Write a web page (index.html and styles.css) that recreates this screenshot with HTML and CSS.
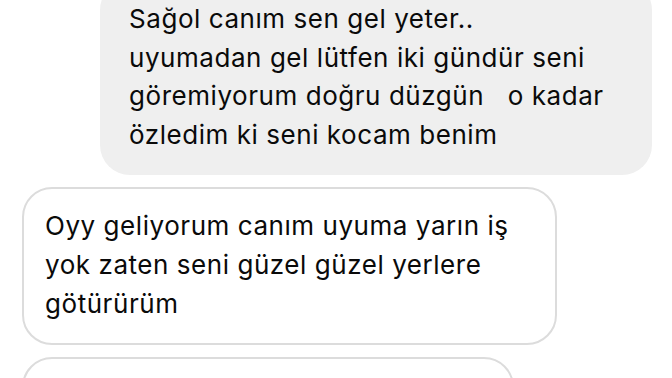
FILE: index.html
```html
<!DOCTYPE html>
<html lang="tr">
<head>
    <meta charset="UTF-8">
    <meta name="viewport" content="width=device-width, initial-scale=1.0">
    <title>Mesajlar</title>
    <link rel="stylesheet" href="styles.css">
</head>
<body>
    <div class="thread">
        <div class="msg sent">
            Sağol canım sen gel yeter..<br>
            uyumadan gel lütfen iki gündür seni<br>
            göremiyorum doğru düzgün&nbsp;&nbsp; o kadar<br>
            özledim ki seni kocam benim
        </div>
        <div class="msg received">
            Oyy geliyorum canım uyuma yarın iş<br>
            yok zaten seni güzel güzel yerlere<br>
            götürürüm
        </div>
        <div class="msg received next"></div>
    </div>
</body>
</html>
```

FILE: styles.css
```css
html, body {
    height: 100%;
}
body {
    margin: 0;
    padding: 0;
    background: #fff;
    color: #0a0a0a;
    font-family: Inter, "Noto Sans", sans-serif;
    overflow: hidden;
}
.thread {
    display: flex;
    flex-direction: column;
    gap: 12px;
    margin-top: -20px;
    padding: 0 20px 0 22px;
}
.msg {
    box-sizing: border-box;
    font-size: 26px;
    line-height: 38.6px;
    letter-spacing: 0.55px;
    border-radius: 30px;
}
.sent {
    align-self: flex-end;
    width: 552px;
    padding: 20px 10px 21px 29px;
    background: #efefef;
}
.received {
    align-self: flex-start;
    width: 535px;
    padding: 18px 10px 20px 21px;
    background: #fff;
    border: 2px solid #dcdcdc;
}
.next {
    width: 492px;
    height: 80px;
}
```
